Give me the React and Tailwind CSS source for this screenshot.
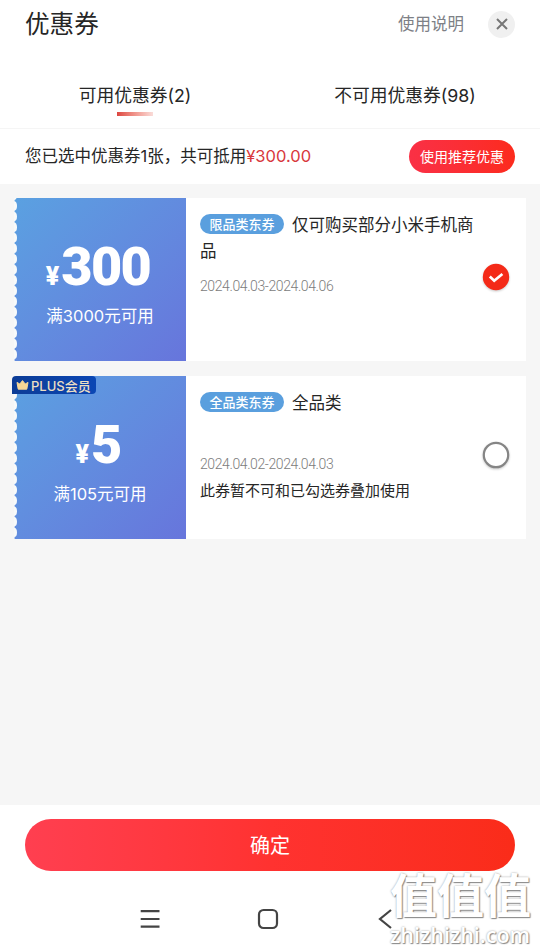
import { useState } from 'react';

const COUPONS = [
  {
    id: 1, amount: '300', limit: '满3000元可用', tag: '限品类东券',
    title: '仅可购买部分小米手机商品', date: '2024.04.03-2024.04.06',
  },
  {
    id: 2, amount: '5', limit: '满105元可用', tag: '全品类东券', plus: true,
    title: '全品类', date: '2024.04.02-2024.04.03', note: '此券暂不可和已勾选券叠加使用',
  },
];

const TABS = [
  { key: 'usable',   label: '可用优惠券(2)' },
  { key: 'unusable', label: '不可用优惠券(98)' },
];

// perforated left edge of a coupon
function Notches() {
  return (
    <svg className="absolute left-0 top-0" width="4" height="163" viewBox="0 0 4 163">
      <rect width="0.6" height="163" fill="#f8fafa"/>
      {Array.from({ length: 16 }, (_, i) => (
        <ellipse key={i} cx="-0.3" cy={-2.6 + i * 10.6} rx="3.3" ry="4.7" fill="#f8fafa"/>
      ))}
    </svg>
  );
}

function PlusBadge() {
  return (
    <div className="absolute -left-0.5 top-0 w-[84px] h-[18px] pl-1 flex items-center gap-0.5 rounded-tl-[4px] rounded-tr-[4px] rounded-br-[4px] bg-linear-to-r from-[#0c3c96] to-[#0b47b4] text-[#eddfc3]">
      <svg width="13" height="12" viewBox="0 0 13 12">
        <path d="M1 3.4 3.8 5 6.5 1.6 9.2 5 12 3.4 10.8 10.2H2.2Z" fill="#f7d795" stroke="#f7d795" strokeLinejoin="round"/>
      </svg>
      <span className="pt-px text-[13px] leading-[18px] font-medium whitespace-nowrap">PLUS会员</span>
    </div>
  );
}

function Radio({ checked, onClick }) {
  return (
    <button onClick={onClick} className="w-8 h-8 shrink-0 flex items-center justify-center">
      <svg width="32" height="32" viewBox="0 0 32 32" className="drop-shadow-[0_1px_1px_rgba(0,0,0,0.22)]">
        {checked ? (
          <>
            <circle cx="16" cy="16" r="13.2" fill="#f42a18"/>
            <path d="M9.8 15.6 14.2 19.8 22.4 13" fill="none" stroke="#fff" strokeWidth="2.7"/>
          </>
        ) : (
          <circle cx="16" cy="16" r="12.2" fill="#fff" stroke="#858585" strokeWidth="2.2"/>
        )}
      </svg>
    </button>
  );
}

function Coupon({ c, checked, onToggle }) {
  return (
    <div className="relative flex h-[163px] bg-white">
      <div className="relative w-[172px] shrink-0 flex flex-col items-center text-white bg-linear-135 from-[#5aa1e1] to-[#6775dc]">
        <Notches/>
        <div className="mt-[42px] h-[54px] pr-1 flex items-baseline gap-0.5 font-['Roboto'] font-black">
          <span className="text-[25px] leading-[54px]">¥</span>
          <span className="text-[54px] leading-[54px] tracking-[-1.6px]">{c.amount}</span>
        </div>
        <div className="mt-2.5 text-[16.5px] leading-6">{c.limit}</div>
      </div>
      {c.plus && <PlusBadge/>}
      <div className="flex-1 pl-3.5 pt-3.5">
        <div className="w-[280px] h-[52px] text-[16.5px] leading-[26px] text-[#262626]">
          <span className="float-left mt-0.5 w-[84px] h-5 mr-2 rounded-full bg-[#5a9fde] text-white text-[13px] leading-5 font-medium text-center">{c.tag}</span>
          {c.title}
        </div>
        <div className="mt-3 text-[14px] leading-5 text-[#7c7c7c] font-['Roboto'] font-light tracking-[-0.4px]">{c.date}</div>
        {c.note && <div className="mt-[7px] text-[15px] leading-5 text-[#262626]">{c.note}</div>}
      </div>
      <div className="pr-4 pb-[5px] flex items-center">
        <Radio checked={checked} onClick={onToggle}/>
      </div>
    </div>
  );
}

export default function App() {
  const [tab, setTab] = useState('usable');
  const [selected, setSelected] = useState(1);

  return (
    <div className="relative w-[540px] h-[952px] flex flex-col bg-white overflow-hidden text-[#262626] font-['Inter','Noto_Sans_CJK_SC',sans-serif]">
      {/* Header */}
      <div className="h-12 shrink-0 px-[25px] flex items-center">
        <h1 className="flex-1 text-[24.6px] leading-12">优惠券</h1>
        <span className="text-[16.5px] text-[#7d8086]">使用说明</span>
        <button className="ml-6 w-[27px] h-[27px] rounded-full bg-[#f0f0f0] flex items-center justify-center">
          <svg width="12" height="12" viewBox="0 0 12 12" stroke="#777" strokeWidth="2">
            <path d="M1 1 11 11M11 1 1 11"/>
          </svg>
        </button>
      </div>

      {/* Tabs */}
      <div className="h-[81px] shrink-0 flex border-b border-[#f5f5f5]">
        {TABS.map(t => (
          <button key={t.key} onClick={() => setTab(t.key)} className="w-1/2 pt-[35px] flex flex-col items-center">
            <span className="text-[17.8px] leading-[26px]">{t.label}</span>
            {tab === t.key && <span className="mt-[3px] w-9 h-1 bg-linear-to-r from-[#dc4540] to-[#f9dcd9]"/>}
          </button>
        ))}
      </div>

      {/* Summary */}
      <div className="h-[55px] shrink-0 px-[25px] flex items-center justify-between">
        <p className="text-[16.5px]">您已选中优惠券1张，共可抵用<span className="text-[#d8383c]">¥300.00</span></p>
        <button className="w-[106px] h-[33px] rounded-full bg-linear-to-r from-[#fa3045] to-[#fc2b1c] text-white text-[14px]">使用推荐优惠</button>
      </div>

      {/* Coupon list */}
      <div className="h-[621px] shrink-0 px-3.5 pt-3.5 flex flex-col gap-[15px] bg-[#f6f6f6]">
        {COUPONS.map(c => (
          <Coupon key={c.id} c={c} checked={selected === c.id} onToggle={() => setSelected(c.id)}/>
        ))}
      </div>

      {/* Confirm */}
      <div className="shrink-0 px-[25px] pt-3.5">
        <button className="w-full h-[52px] pt-0.5 rounded-full bg-linear-to-r from-[#ff3f50] via-[#ff3230] to-[#fa2c19] text-white text-[20px]">确定</button>
      </div>

      {/* System navigation */}
      <div className="pt-9 pl-[138px] flex items-center gap-[94px] text-[#444]">
        <svg width="24" height="24" viewBox="0 0 24 24" fill="none" stroke="currentColor" strokeWidth="2.2">
          <path d="M2.7 4.2H21.5M2.7 12H21.5M2.7 19.7H21.5"/>
        </svg>
        <svg width="24" height="24" viewBox="0 0 24 24" fill="none" stroke="currentColor" strokeWidth="2.2">
          <rect x="3" y="3" width="18" height="18" rx="4.5"/>
        </svg>
        <svg width="24" height="24" viewBox="0 0 24 24" fill="none" stroke="currentColor" strokeWidth="2.2">
          <path d="M17 3 6 12 17 21"/>
        </svg>
      </div>

      {/* Watermark */}
      <div className="absolute left-[390px] top-[869px] text-white">
        <div className="h-[54px] text-[47px] leading-[54px] font-bold [text-shadow:1px_1px_1px_#888,0_0_2px_#999]">值值值</div>
        <div className="text-[21.5px] leading-[24px] font-['Open_Sans'] font-semibold [text-shadow:1px_1px_1px_#888,0_0_2px_#999]">zhizhizhi.com</div>
      </div>
    </div>
  );
}
